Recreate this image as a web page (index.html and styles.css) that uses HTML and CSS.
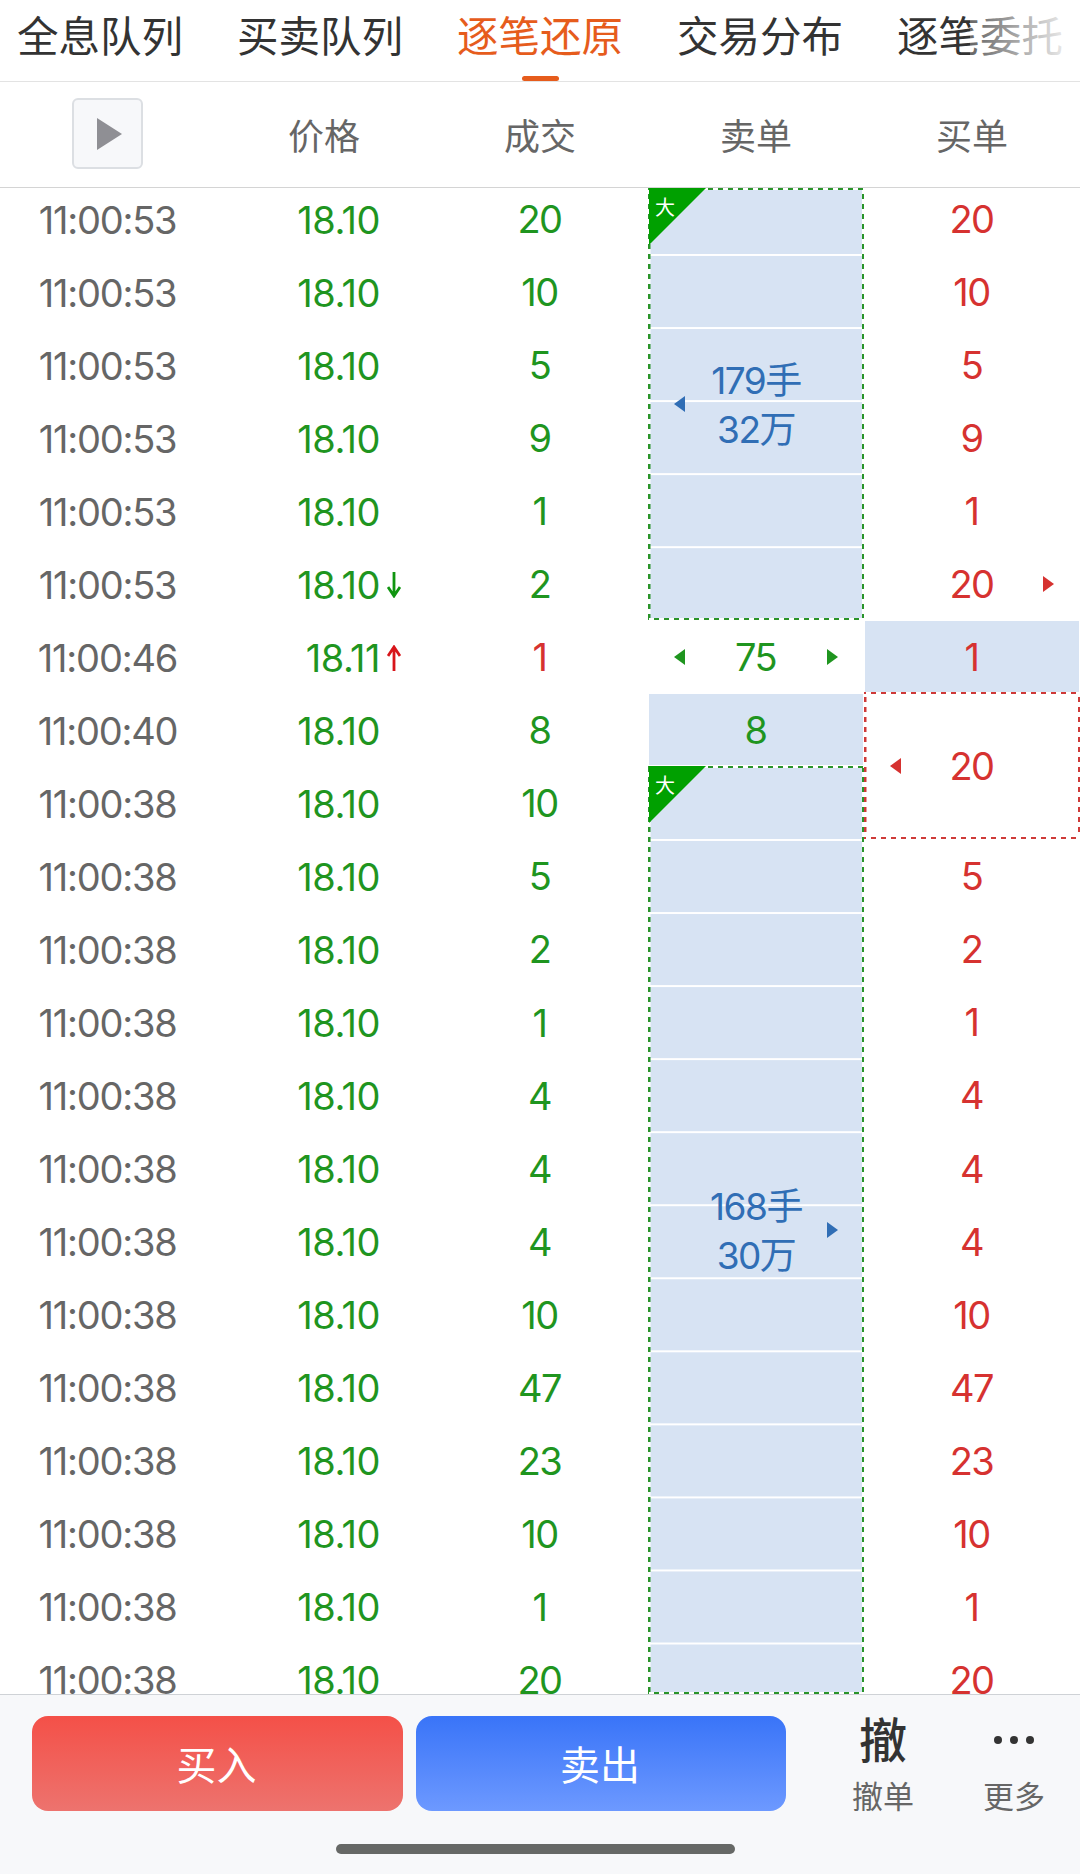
FILE: index.html
```html
<!DOCTYPE html>
<html lang="zh-CN">
<head>
    <meta charset="UTF-8">
    <meta name="viewport" content="width=device-width, initial-scale=1.0">
    <title>逐笔还原</title>
    <link rel="stylesheet" href="styles.css">
</head>
<body>

    <!-- Top tabs -->
    <nav class="tabs">
        <a class="tab">全息队列</a>
        <a class="tab">买卖队列</a>
        <a class="tab active">逐笔还原</a>
        <a class="tab">交易分布</a>
        <a class="tab">逐笔委托</a>
    </nav>

    <!-- Column titles -->
    <div class="table-head">
        <div class="head-cell">
            <button class="play-button">
                <svg width="25" height="32" viewBox="0 0 25 32"><path d="M0 0L25 16L0 32Z" fill="#8f8f94"/></svg>
            </button>
        </div>
        <div class="head-cell">价格</div>
        <div class="head-cell">成交</div>
        <div class="head-cell">卖单</div>
        <div class="head-cell">买单</div>
    </div>

    <div class="table-body">
        <div class="column time-column" id="time-column"></div>
        <div class="column price-column" id="price-column"></div>
        <div class="column" id="deal-column"></div>

        <!-- Sell orders -->
        <div class="sell-column">
            <div class="order order-first">
                <span class="big-tag"><span class="big-text">大</span></span>
                <i class="arrow arrow-left"></i>
                <div class="order-text"><div>179手</div><div>32万</div></div>
            </div>
            <div class="cell green">
                <i class="arrow arrow-left"></i>75<i class="arrow arrow-right"></i>
            </div>
            <div class="cell green filled">8</div>
            <div class="order order-second">
                <span class="big-tag"><span class="big-text">大</span></span>
                <div class="order-text"><div>168手</div><div>30万</div></div>
                <i class="arrow arrow-right"></i>
            </div>
        </div>

        <div class="column" id="buy-column"></div>
    </div>

    <!-- Bottom actions -->
    <footer class="footer">
        <div class="actions">
            <button class="trade-button buy-button">买入</button>
            <button class="trade-button sell-button">卖出</button>
            <div class="action">
                <div class="action-icon action-char">撤</div>
                <div class="action-label">撤单</div>
            </div>
            <div class="action action-more">
                <div class="action-icon">
                    <svg width="40" height="8" viewBox="0 0 40 8" fill="#333"><circle cx="4" cy="4" r="4"/><circle cx="20" cy="4" r="4"/><circle cx="36" cy="4" r="4"/></svg>
                </div>
                <div class="action-label">更多</div>
            </div>
        </div>
        <div class="home-bar"></div>
    </footer>

    <script>
        // Each row: time, price, volume, price direction
        const trades = [
            ['11:00:53', '18.10', 20],
            ['11:00:53', '18.10', 10],
            ['11:00:53', '18.10', 5],
            ['11:00:53', '18.10', 9],
            ['11:00:53', '18.10', 1],
            ['11:00:53', '18.10', 2, 'down'],
            ['11:00:46', '18.11', 1, 'up'],
            ['11:00:40', '18.10', 8],
            ['11:00:38', '18.10', 10],
            ['11:00:38', '18.10', 5],
            ['11:00:38', '18.10', 2],
            ['11:00:38', '18.10', 1],
            ['11:00:38', '18.10', 4],
            ['11:00:38', '18.10', 4],
            ['11:00:38', '18.10', 4],
            ['11:00:38', '18.10', 10],
            ['11:00:38', '18.10', 47],
            ['11:00:38', '18.10', 23],
            ['11:00:38', '18.10', 10],
            ['11:00:38', '18.10', 1],
            ['11:00:38', '18.10', 20]
        ];

        const icons = {
            down: '<svg class="trend" width="14" height="26" viewBox="0 0 14 26"><path d="M7 0V24M1 15L7 24L13 15" fill="none" stroke="#109510" stroke-width="2.8"/></svg>',
            up: '<svg class="trend" width="14" height="26" viewBox="0 0 14 26"><path d="M7 26V2M1 11L7 2L13 11" fill="none" stroke="#d8151a" stroke-width="2.8"/></svg>'
        };

        function addCell(columnId, className, html) {
            const cell = document.createElement('div');
            cell.className = 'cell ' + className;
            cell.innerHTML = html;
            document.getElementById(columnId).appendChild(cell);
        }

        trades.forEach(([time, price, volume, trend]) => {
            addCell('time-column', '', time);
            addCell('price-column', 'green', price + (icons[trend] || ''));
            addCell('deal-column', trend === 'up' ? 'red' : 'green', volume);
        });

        // Buy orders, the order at index 7 covers two rows
        const buys = [20, 10, 5, 9, 1, 20, 1, 20, 5, 2, 1, 4, 4, 4, 10, 47, 23, 10, 1, 20];
        buys.forEach((volume, index) => {
            if (index === 5) {
                addCell('buy-column', 'red', volume + '<i class="arrow arrow-right"></i>');
            } else if (index === 6) {
                addCell('buy-column', 'red filled', volume);
            } else if (index === 7) {
                addCell('buy-column', 'red buy-order', '<i class="arrow arrow-left"></i>' + volume);
            } else {
                addCell('buy-column', 'red', volume);
            }
        });
    </script>

</body>
</html>
```
FILE: styles.css
```css
* {
    box-sizing: border-box;
}

body {
    margin: 0;
    width: 1080px;
    height: 1874px;
    display: flex;
    flex-direction: column;
    overflow: hidden;
    background-color: #fff;
    color: #666;
    font-family: Inter, "Noto Sans CJK SC", sans-serif;
}

button {
    border: none;
    padding: 0;
    font-family: inherit;
}

/* Tabs */
.tabs {
    position: relative;
    flex: none;
    display: flex;
    justify-content: center;
    height: 82px;
    border-bottom: 1px solid #e3e3e3;
    overflow: hidden;
}

.tabs::after {
    content: "";
    position: absolute;
    top: 0;
    right: 0;
    width: 110px;
    height: 80px;
    background: linear-gradient(to right, rgba(255, 255, 255, 0.25), #fff);
}

.tab {
    flex: none;
    display: flex;
    flex-direction: column;
    align-items: center;
    width: 220px;
    font-size: 41.5px;
    line-height: 74px;
    color: #333;
}

.tab.active {
    color: #e65c1c;
}

.tab.active::after {
    content: "";
    width: 37px;
    height: 5px;
    margin-top: 2px;
    border-radius: 3px;
    background-color: #e65c1c;
}

/* Column titles */
.table-head {
    flex: none;
    display: grid;
    grid-template-columns: repeat(5, 216px);
    align-items: center;
    height: 106px;
    padding-bottom: 2px;
    border-bottom: 1px solid #d4d4d4;
    font-size: 36px;
}

.head-cell {
    display: flex;
    justify-content: center;
}

.play-button {
    display: flex;
    align-items: center;
    justify-content: center;
    width: 71px;
    height: 71px;
    margin-right: 1px;
    padding-left: 4px;
    border: 2px solid #dcdfe3;
    border-radius: 6px;
    background-color: #f7f8fa;
}

/* Rows */
.table-body {
    flex: none;
    display: grid;
    grid-template-columns: repeat(5, 216px);
    height: 1506px;
    overflow: hidden;
    font-size: 38px;
    letter-spacing: -1.5px;
}

.column {
    margin-top: -6px;
}

.cell {
    position: relative;
    display: flex;
    align-items: center;
    justify-content: center;
    height: 73.05px;
    padding-top: 1px;
    padding-right: 1px;
}

.time-column .cell,
.price-column .cell {
    padding-top: 2px;
}

.time-column {
    letter-spacing: -1.2px;
}

.price-column {
    letter-spacing: -0.5px;
}

.price-column .cell {
    justify-content: flex-end;
    padding-right: 52px;
}

.trend {
    position: absolute;
    left: 171px;
    top: 25px;
}

.green {
    color: #1f951f;
}

.red {
    color: #d63230;
}

.filled {
    background: linear-gradient(#d7e3f3, #d7e3f3) 1px 1px / 214px 71px no-repeat;
}

/* Orders that cover several rows */
.order,
.buy-order {
    --line: #2a942a;
    --dash-x: repeating-linear-gradient(to right, var(--line) 0 5px, #fff 5px 10px);
    --dash-y: repeating-linear-gradient(to bottom, var(--line) 0 5px, #fff 5px 10px);
}

.order {
    position: relative;
    display: flex;
    align-items: center;
    justify-content: center;
    padding-top: 2px;
    color: #306eb5;
    background:
        var(--dash-x) 0 0 / 100% 2px no-repeat,
        var(--dash-x) -4px 100% / 120% 2px no-repeat,
        var(--dash-y) 0 var(--shift) / 2.5px 120% no-repeat,
        var(--dash-y) 100% var(--shift) / 2.5px 120% no-repeat,
        linear-gradient(#fff 2px, transparent 2px) 0 var(--row) / 100% 73.05px,
        #d7e3f3;
}

.order-first {
    --shift: -4px;
    --row: 66px;
    height: 432px;
}

.order-second {
    --shift: -9px;
    --row: 73px;
    height: 928px;
}

.buy-order {
    --line: #cf3a38;
    height: 147px;
    margin-top: -1px;
    background:
        var(--dash-x) -3px 0 / 120% 2px no-repeat,
        var(--dash-x) -3px 100% / 120% 2px no-repeat,
        var(--dash-y) 0 -5px / 2.5px 120% no-repeat,
        var(--dash-y) 100% -5px / 2.5px 120% no-repeat;
}

.order-text {
    font-size: 37px;
    line-height: 49px;
    text-align: center;
}

.big-tag {
    position: absolute;
    top: 0;
    left: 1px;
    width: 57px;
    height: 57px;
    background-color: #00a000;
    clip-path: polygon(0 0, 100% 0, 0 100%);
}

.big-text {
    display: block;
    padding: 6px 0 0 6px;
    font-size: 20px;
    line-height: 29px;
    color: #fff;
}

.arrow {
    position: absolute;
    top: calc(50% - 8px);
    border-top: 8px solid transparent;
    border-bottom: 8px solid transparent;
}

.arrow-left {
    left: 26px;
    border-right: 11px solid;
}

.arrow-right {
    right: 26px;
    border-left: 11px solid;
}

/* Footer */
.footer {
    flex: 1;
    border-top: 1px solid #cfd2d6;
    background-color: #f7f8fa;
}

.actions {
    display: flex;
    padding: 21px 0 0 32px;
    height: 149px;
}

.trade-button {
    width: 371px;
    height: 95px;
    margin-right: 13px;
    padding: 0 2px 2px 0;
    border-radius: 16px;
    font-size: 40px;
    color: #fff;
}

.buy-button {
    background: linear-gradient(#f45048, #ed736e);
}

.sell-button {
    width: 370px;
    background: linear-gradient(#3974f8, #6d99ff);
}

.action {
    width: 132px;
    margin-left: 18px;
    text-align: center;
}

.action-more {
    margin-left: -1px;
}

.action-icon {
    display: flex;
    align-items: center;
    justify-content: center;
    height: 48px;
    font-size: 48px;
    font-weight: 500;
    color: #333;
}

.action-char {
    padding-bottom: 6px;
}

.action-label {
    margin-top: 11px;
    font-size: 31px;
    line-height: 44px;
}

.home-bar {
    width: 399px;
    height: 10px;
    margin-left: 336px;
    border-radius: 5px;
    background-color: #666866;
}
```
